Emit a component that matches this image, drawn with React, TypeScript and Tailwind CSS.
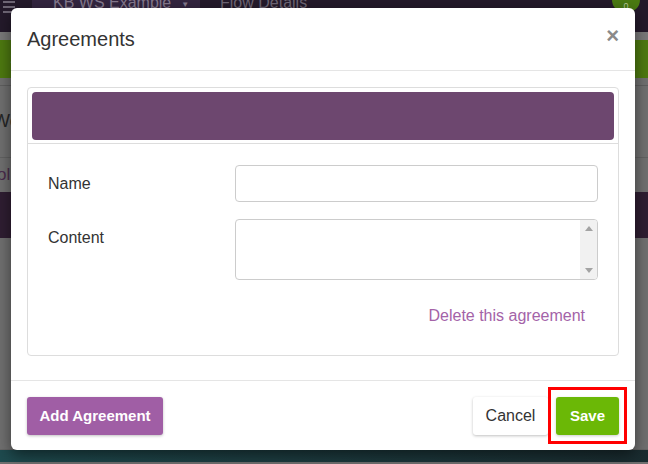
import React from "react";

const App: React.FC = () => {
  return (
    <div className="relative h-[464px] w-[648px] overflow-hidden bg-[#707070] font-['Liberation_Sans',Arial,sans-serif]">
      {/* Dimmed page behind the modal */}
      <div className="flex h-[32px] items-start bg-[#241a2b]">
        <div className="flex w-[18px] flex-col gap-[3px] pl-[3px] pt-[1px]">
          <span className="h-[2px] w-[12px] bg-[#6f6776]"></span>
          <span className="h-[2px] w-[12px] bg-[#6f6776]"></span>
          <span className="h-[2px] w-[12px] bg-[#6f6776]"></span>
        </div>
        <div className="ml-[14px] flex h-[32px] w-[168px] items-start whitespace-nowrap bg-[#332540] pl-[21px]">
          <span className="-mt-[7px] text-[16px] leading-[20px] text-[#857a8e]">KB WS Example</span>
          <span className="ml-[10px] -mt-[1px] text-[8px] text-[#857a8e]">▼</span>
        </div>
        <span className="-mt-[7px] ml-[20px] whitespace-nowrap text-[16px] leading-[20px] text-[#6f6776]">
          Flow Details
        </span>
        <div className="ml-auto -mt-[12px] mr-[8px] flex h-[24px] w-[28px] items-end justify-center rounded-full bg-[#4a7a12] pb-[1px] text-[9px] leading-[10px] text-[#b5c99a]">
          0
        </div>
      </div>
      <div className="h-[8px] bg-[#7a7a7a]"></div>
      <div className="flex h-[38px] justify-between">
        <div className="flex w-[40px] items-center bg-[#4e7a10] pl-[10px] text-[18px] text-[#8fa98a]">
          S
        </div>
        <div className="w-[24px] rounded-l-[4px] bg-[#4e7a10]"></div>
      </div>
      <div className="h-[8px] border-b border-[#5f5f5f]"></div>
      <div className="flex h-[72px] items-center border-b border-[#626262] text-[18px] text-[#262626]">
        <span className="-ml-[7px]">We</span>
      </div>
      <div className="flex h-[34px] items-center text-[17px] text-[#4a2c4c]">
        <span className="-ml-[3px]">ol</span>
      </div>
      <div className="h-[46px] bg-[#2f1e32]"></div>
      <div className="h-[212px] border-b border-[#666]"></div>
      <div className="h-[12px] bg-gradient-to-r from-[#1e4a4e] to-[#1a2c30]"></div>

      {/* Modal */}
      <div className="absolute left-[11px] top-[8px] flex w-[624px] flex-col rounded-[6px] bg-white shadow-[0_5px_15px_rgba(0,0,0,0.5)]">
        <div className="flex h-[63px] items-center justify-between border-b border-[#e5e5e5] pl-[16px] pr-[16px]">
          <h1 className="text-[20px] leading-[24px] text-[#333]">Agreements</h1>
          <span className="-mt-[6px] text-[22px] font-bold leading-[22px] text-[#8a8a8a]">×</span>
        </div>

        <div className="px-[16px] pb-[24px] pt-[16px]">
          <div className="rounded-[4px] border border-[#dddddd]">
            <div className="border-b border-[#dddddd] px-[4px] pb-[3px] pt-[4px]">
              <div className="h-[48px] rounded-[4px] bg-[#6d476f]"></div>
            </div>
            <div className="flex flex-col px-[20px] pb-[28px] pt-[21px]">
              <div className="flex items-center">
                <label className="w-[187px] text-[16px] text-[#333]">Name</label>
                <div className="h-[37px] flex-1 rounded-[4px] border border-[#cccccc]"></div>
              </div>
              <div className="mt-[17px] flex">
                <label className="flex h-[37px] w-[187px] items-center text-[16px] text-[#333]">
                  Content
                </label>
                <div className="flex h-[61px] flex-1 rounded-[4px] border border-[#cccccc]">
                  <div className="flex-1"></div>
                  <div className="flex w-[17px] flex-col items-center justify-between rounded-r-[3px] bg-[#f1f1f1] py-[6px]">
                    <span className="h-0 w-0 border-x-[4px] border-b-[5px] border-x-transparent border-b-[#a3a3a3]"></span>
                    <span className="h-0 w-0 border-x-[4px] border-t-[5px] border-x-transparent border-t-[#a3a3a3]"></span>
                  </div>
                </div>
              </div>
              <div className="mt-[25px] flex justify-end pr-[13px]">
                <a className="text-[16px] leading-[22px] text-[#a463a8]">Delete this agreement</a>
              </div>
            </div>
          </div>
        </div>

        <div className="flex items-center justify-between border-t border-[#e5e5e5] px-[16px] pb-[15px] pt-[16px]">
          <button className="h-[38px] w-[136px] rounded-[3px] bg-[#a05ea5] text-[15px] font-bold text-white shadow-[0_1px_3px_rgba(0,0,0,0.25)]">
            Add Agreement
          </button>
          <div className="flex gap-[8px]">
            <button className="h-[38px] w-[75px] rounded-[3px] bg-white text-[16px] text-[#333] shadow-[0_1px_3px_rgba(0,0,0,0.25)]">
              Cancel
            </button>
            <div className="relative">
              <button className="h-[38px] w-[63px] rounded-[3px] bg-[#6bb806] text-[15px] font-bold text-white shadow-[0_1px_3px_rgba(0,0,0,0.2)]">
                Save
              </button>
              <div className="absolute -bottom-[9px] -left-[8px] -right-[8px] -top-[10px] border-[3px] border-[#ff0000]"></div>
            </div>
          </div>
        </div>
      </div>
    </div>
  );
};

export default App;
